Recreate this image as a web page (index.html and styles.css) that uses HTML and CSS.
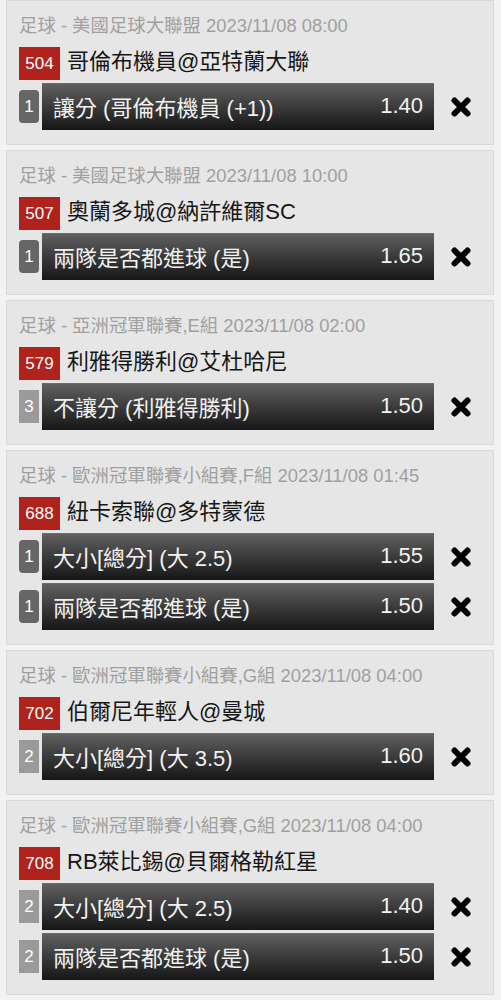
FILE: index.html
```html
<!DOCTYPE html>
<html lang="zh-Hant">
<head>
<meta charset="utf-8">
<title>Bet slip</title>
<link rel="stylesheet" href="styles.css">
</head>
<body>
<svg width="0" height="0" class="defs">
  <defs>
    <symbol id="x" viewBox="0 0 22 22">
      <path d="M4.5 4.5 L17.5 17.5 M17.5 4.5 L4.5 17.5" stroke="#000" stroke-width="6" stroke-linecap="round" fill="none"/>
    </symbol>
  </defs>
</svg>
<div class="list">
  <div class="card">
    <div class="league">足球 - 美國足球大聯盟 2023/11/08 08:00</div>
    <div class="match"><span class="code">504</span><span class="teams">哥倫布機員@亞特蘭大聯</span></div>
    <div class="bet">
      <span class="num dark">1</span>
      <div class="bar"><span class="sel">讓分 (哥倫布機員 (+1))</span><span class="odds">1.40</span></div>
      <svg class="del"><use href="#x"/></svg>
    </div>
  </div>
  <div class="card">
    <div class="league">足球 - 美國足球大聯盟 2023/11/08 10:00</div>
    <div class="match"><span class="code">507</span><span class="teams">奧蘭多城@納許維爾SC</span></div>
    <div class="bet">
      <span class="num dark">1</span>
      <div class="bar"><span class="sel">兩隊是否都進球 (是)</span><span class="odds">1.65</span></div>
      <svg class="del"><use href="#x"/></svg>
    </div>
  </div>
  <div class="card">
    <div class="league">足球 - 亞洲冠軍聯賽,E組 2023/11/08 02:00</div>
    <div class="match"><span class="code">579</span><span class="teams">利雅得勝利@艾杜哈尼</span></div>
    <div class="bet">
      <span class="num light">3</span>
      <div class="bar"><span class="sel">不讓分 (利雅得勝利)</span><span class="odds">1.50</span></div>
      <svg class="del"><use href="#x"/></svg>
    </div>
  </div>
  <div class="card">
    <div class="league">足球 - 歐洲冠軍聯賽小組賽,F組 2023/11/08 01:45</div>
    <div class="match"><span class="code">688</span><span class="teams">紐卡索聯@多特蒙德</span></div>
    <div class="bet">
      <span class="num dark">1</span>
      <div class="bar"><span class="sel">大小[總分] (大 2.5)</span><span class="odds">1.55</span></div>
      <svg class="del"><use href="#x"/></svg>
    </div>
    <div class="bet">
      <span class="num dark">1</span>
      <div class="bar"><span class="sel">兩隊是否都進球 (是)</span><span class="odds">1.50</span></div>
      <svg class="del"><use href="#x"/></svg>
    </div>
  </div>
  <div class="card">
    <div class="league">足球 - 歐洲冠軍聯賽小組賽,G組 2023/11/08 04:00</div>
    <div class="match"><span class="code">702</span><span class="teams">伯爾尼年輕人@曼城</span></div>
    <div class="bet">
      <span class="num light">2</span>
      <div class="bar"><span class="sel">大小[總分] (大 3.5)</span><span class="odds">1.60</span></div>
      <svg class="del"><use href="#x"/></svg>
    </div>
  </div>
  <div class="card">
    <div class="league">足球 - 歐洲冠軍聯賽小組賽,G組 2023/11/08 04:00</div>
    <div class="match"><span class="code">708</span><span class="teams">RB萊比錫@貝爾格勒紅星</span></div>
    <div class="bet">
      <span class="num light">2</span>
      <div class="bar"><span class="sel">大小[總分] (大 2.5)</span><span class="odds">1.40</span></div>
      <svg class="del"><use href="#x"/></svg>
    </div>
    <div class="bet">
      <span class="num light">2</span>
      <div class="bar"><span class="sel">兩隊是否都進球 (是)</span><span class="odds">1.50</span></div>
      <svg class="del"><use href="#x"/></svg>
    </div>
  </div>
</div>
</body>
</html>
```
FILE: styles.css
```css
html, body {
  margin: 0;
  padding: 0;
  background: #f2f2f2;
  font-family: "Liberation Sans", "Noto Sans CJK TC", sans-serif;
}
.defs {
  position: absolute;
  width: 0;
  height: 0;
}
.list {
  padding: 0 7px 0 6px;
  display: flex;
  flex-direction: column;
  gap: 5px;
}
.card {
  background: #e6e6e6;
  border: 1px solid #d9d9d9;
  padding: 15px 0 14px 12px;
}
.league {
  font-size: 18.4px;
  line-height: 20px;
  color: #a0a0a0;
  white-space: nowrap;
}
.match {
  margin-top: 11px;
  display: flex;
  align-items: center;
  height: 33px;
}
.code {
  width: 41px;
  height: 33px;
  background: #b0231d;
  color: #fff;
  font-size: 17px;
  display: flex;
  align-items: center;
  justify-content: center;
}
.teams {
  margin-left: 7px;
  font-size: 22px;
  line-height: 28px;
  padding-bottom: 3px;
  color: #161616;
  white-space: nowrap;
}
.bet {
  margin-top: 3px;
  display: flex;
  align-items: center;
  height: 47px;
}
.num {
  width: 20px;
  height: 33px;
  color: #fff;
  font-size: 17px;
  display: flex;
  align-items: center;
  justify-content: center;
}
.num.dark {
  background: #666;
  border-radius: 4px;
}
.num.light {
  background: #9a9a9a;
}
.bar {
  margin-left: 3px;
  width: 392px;
  height: 47px;
  box-sizing: border-box;
  padding: 0 11px 2px;
  background: linear-gradient(#606060, #3e3e3e 45%, #161616);
  border-top: 1px solid #6c6c6c;
  color: #f2f2f2;
  font-size: 22px;
  display: flex;
  align-items: center;
  justify-content: space-between;
  white-space: nowrap;
}
.del {
  width: 22px;
  height: 22px;
  margin-left: 16px;
}
```
